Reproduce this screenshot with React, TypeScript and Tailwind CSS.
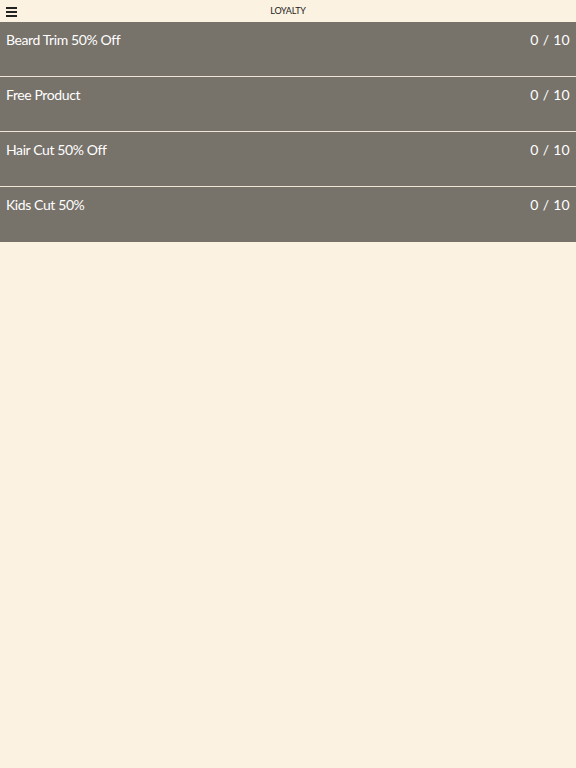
import React from "react";

const items = [
  { name: "Beard Trim 50% Off", value: "0 / 10" },
  { name: "Free Product", value: "0 / 10" },
  { name: "Hair Cut 50% Off", value: "0 / 10" },
  { name: "Kids Cut 50%", value: "0 / 10" },
];

export default function App() {
  return (
    <div
      className="w-[576px] h-[768px] bg-[#fcf2e2] flex flex-col"
      style={{ fontFamily: "Lato, 'Open Sans', sans-serif" }}
    >
      <div className="h-[22px] relative flex items-center justify-center">
        <div className="absolute left-[6px] top-[7px] flex flex-col gap-[2px]">
          <div className="w-[11px] h-[2px] bg-[#222]" />
          <div className="w-[11px] h-[2px] bg-[#222]" />
          <div className="w-[11px] h-[2px] bg-[#222]" />
        </div>
        <span className="text-[9px] text-[#222] tracking-tight">LOYALTY</span>
      </div>
      <div className="flex flex-col">
        {items.map((it, i) => (
          <div
            key={it.name}
            className={
              "h-[55px] bg-[#77726a] flex items-start justify-between px-[6px] pt-[9px] text-white text-[14px] leading-[17px] tracking-[-0.4px] " +
              (i < items.length - 1 ? "border-b border-[#efe6d6]" : "")
            }
          >
            <span>{it.name}</span>
            <span className="tracking-[0.3px]">{it.value}</span>
          </div>
        ))}
      </div>
    </div>
  );
}
